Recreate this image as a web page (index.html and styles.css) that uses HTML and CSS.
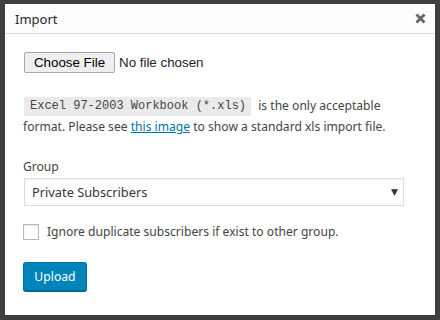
FILE: index.html
```html
<!DOCTYPE html>
<html>
<head>
<meta charset="utf-8">
<link rel="stylesheet" href="styles.css">
</head>
<body>
<div class="dialog">
  <div class="header">
    <span class="title">Import</span>
    <svg class="close" width="11" height="11" viewBox="0 0 11 11"><path d="M1.5 1.5 L9.5 9.5 M9.5 1.5 L1.5 9.5" stroke="#666" stroke-width="2.8" stroke-linecap="butt"/></svg>
  </div>
  <div class="content">
    <div class="file-row">
      <button class="file-btn" type="button">Choose File</button>
      <span class="file-name">No file chosen</span>
    </div>
    <p class="note"><code>Excel 97-2003 Workbook (*.xls)</code> <span>is the only acceptable</span> <span>format. Please see</span> <a href="#">this image</a> <span>to show a standard xls import file.</span></p>
    <label class="field-label">Group</label>
    <div class="select">
      <span>Private Subscribers</span>
      <span class="arrow">&#9660;</span>
    </div>
    <label class="check-row">
      <span class="checkbox"></span>
      <span>Ignore duplicate subscribers if exist to other group.</span>
    </label>
    <button class="upload" type="button">Upload</button>
  </div>
</div>
</body>
</html>
```
FILE: styles.css
```css
* { box-sizing: border-box; }
html, body { margin: 0; padding: 0; }
body {
  background: #3f3f3f;
  width: 440px;
  height: 320px;
  overflow: hidden;
  font-family: "Noto Sans", sans-serif;
  font-size: 12.1px;
  color: #444;
}
.dialog {
  margin: 4px 5px 0 5px;
  width: 430px;
  height: 311px;
  background: #fff;
}
.header {
  height: 30px;
  background: #fcfcfc;
  border-bottom: 1px solid #dddddd;
  display: flex;
  align-items: center;
  justify-content: space-between;
  padding: 0 9px 0 10px;
}
.title {
  font-size: 13px;
  color: #23282d;
}
.close { display: block; }
.content {
  padding: 18px 19px 0 18px;
}
.file-row {
  display: flex;
  align-items: center;
  gap: 4px;
  margin-left: 1px;
}
.file-btn {
  font-family: "Liberation Sans", Arial, sans-serif;
  font-size: 13.33px;
  color: #000;
  height: 21px;
  width: 91px;
  padding: 0;
  background: #efefef;
  border: 1px solid #a6a6a6;
  border-radius: 2px;
}
.file-name {
  font-family: "Liberation Sans", Arial, sans-serif;
  font-size: 13.33px;
  color: #222;
}
.note {
  margin: 22px 0 0 0;
  line-height: 21px;
}
.note code {
  display: inline-block;
  font-family: "Liberation Mono", monospace;
  font-size: 12px;
  line-height: 19px;
  vertical-align: 1px;
  background: #eaeaea;
  padding: 0 5px 0 6px;
  margin: 0 4px 0 1px;
}
.note a { color: #0073aa; text-decoration: underline; }
.field-label {
  display: block;
  margin-top: 21px;
  line-height: 18px;
}
.select {
  margin-top: 2px;
  height: 28px;
  width: 380px;
  margin-left: 1px;
  border: 1px solid #dddddd;
  box-shadow: inset 0 1px 2px rgba(0,0,0,0.05);
  display: flex;
  align-items: center;
  justify-content: space-between;
  padding: 0 5px 0 7px;
  color: #32373c;
  font-size: 12.8px;
}
.arrow { font-size: 9px; color: #333; font-family: "DejaVu Sans", sans-serif; }
.check-row {
  display: flex;
  align-items: center;
  gap: 8px;
  margin-top: 17px;
}
.checkbox {
  width: 16px;
  height: 16px;
  border: 1px solid #b4b9be;
  background: #fff;
  box-shadow: inset 0 1px 2px rgba(0,0,0,0.1);
}
.upload {
  margin-top: 22px;
  height: 29px;
  width: 64px;
  padding: 0;
  background: #0085ba;
  border: 1px solid #0073aa;
  border-bottom-color: #006799;
  border-radius: 3px;
  box-shadow: 0 1px 0 #006799;
  color: #fff;
  font-family: "Noto Sans", sans-serif;
  font-size: 12.2px;
}
```
